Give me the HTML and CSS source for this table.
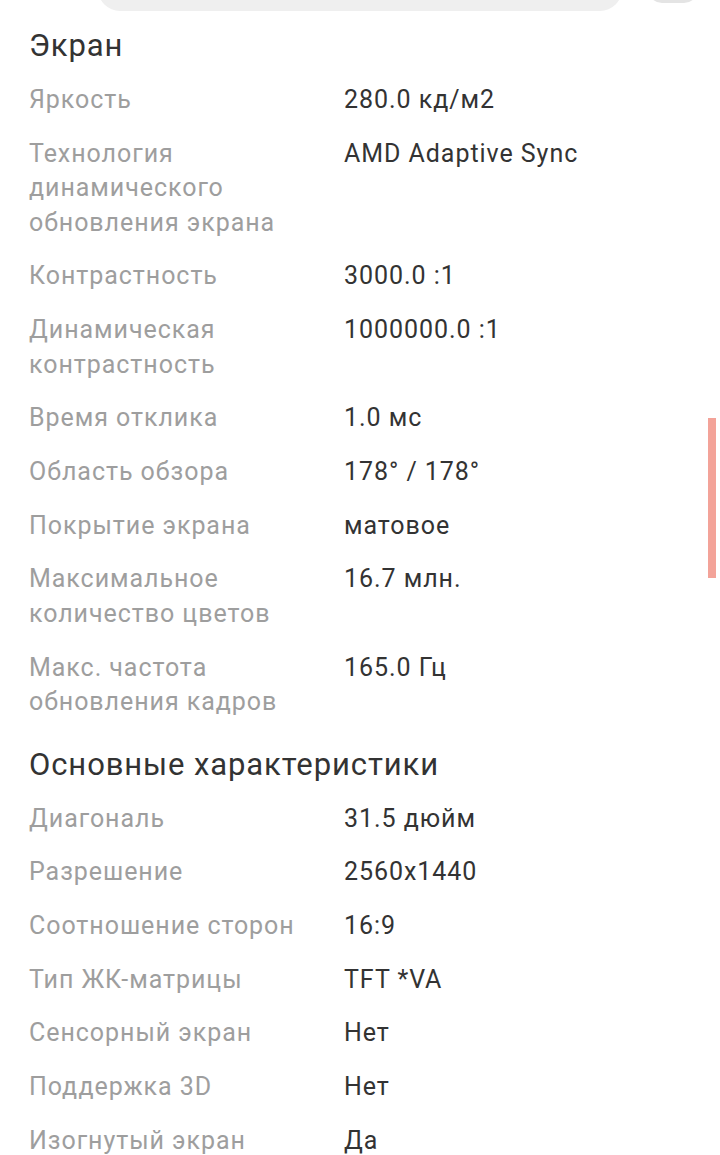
FILE: index.html
```html
<!DOCTYPE html>
<html lang="ru">
<head>
<meta charset="utf-8">
<link rel="stylesheet" href="styles.css">
</head>
<body>
<div class="topbar">
  <div class="search"></div>
  <div class="btn"></div>
</div>
<main class="page">
  <section class="section">
    <h2 class="title">Экран</h2>
    <dl class="specs">
      <div class="row"><dt>Яркость</dt><dd>280.0 кд/м2</dd></div>
      <div class="row"><dt>Технология динамического обновления экрана</dt><dd>AMD Adaptive Sync</dd></div>
      <div class="row"><dt>Контрастность</dt><dd>3000.0 :1</dd></div>
      <div class="row"><dt>Динамическая контрастность</dt><dd>1000000.0 :1</dd></div>
      <div class="row"><dt>Время отклика</dt><dd>1.0 мс</dd></div>
      <div class="row"><dt>Область обзора</dt><dd>178° / 178°</dd></div>
      <div class="row"><dt>Покрытие экрана</dt><dd>матовое</dd></div>
      <div class="row"><dt>Максимальное количество цветов</dt><dd>16.7 млн.</dd></div>
      <div class="row"><dt>Макс. частота обновления кадров</dt><dd>165.0 Гц</dd></div>
    </dl>
  </section>
  <section class="section">
    <h2 class="title">Основные характеристики</h2>
    <dl class="specs">
      <div class="row"><dt>Диагональ</dt><dd>31.5 дюйм</dd></div>
      <div class="row"><dt>Разрешение</dt><dd>2560x1440</dd></div>
      <div class="row"><dt>Соотношение сторон</dt><dd>16:9</dd></div>
      <div class="row"><dt>Тип ЖК-матрицы</dt><dd>TFT *VA</dd></div>
      <div class="row"><dt>Сенсорный экран</dt><dd>Нет</dd></div>
      <div class="row"><dt>Поддержка 3D</dt><dd>Нет</dd></div>
      <div class="row"><dt>Изогнутый экран</dt><dd>Да</dd></div>
    </dl>
  </section>
</main>
<div class="scrollbar"></div>
</body>
</html>
```
FILE: styles.css
```css
html, body {
  margin: 0;
  padding: 0;
  background: #ffffff;
}
body {
  font-family: Roboto, "Noto Sans", sans-serif;
  width: 720px;
  height: 1155px;
  overflow: hidden;
  position: relative;
}
.topbar {
  height: 11px;
  overflow: hidden;
  display: flex;
  align-items: flex-end;
  padding: 0 20px 0 98px;
  gap: 26px;
}
.search {
  flex: 0 0 524px;
  height: 44px;
  border-radius: 0 0 22px 22px;
  background: #efefef;
}
.btn {
  flex: 0 0 50px;
  height: 40px;
  margin-bottom: 8px;
  border-radius: 0 0 14px 14px;
  background: #e4e4e4;
}
.page {
  padding: 0 0 0 29px;
}
.section {
  margin: 0;
}
.title {
  margin: 15px 0 17px;
  font-size: 31px;
  letter-spacing: 0.9px;
  line-height: 40px;
  font-weight: 400;
  color: #333333;
}
.section + .section .title {
  margin-top: 25px;
}
.specs {
  margin: 0;
  display: flex;
  flex-direction: column;
  gap: 19.2px;
}
.row {
  display: grid;
  grid-template-columns: 300px 1fr;
  column-gap: 15px;
}
.row dt, .row dd {
  margin: 0;
  font-size: 25px;
  letter-spacing: 0.95px;
  line-height: 34.5px;
}
.row dt {
  color: #9e9e9e;
}
.row dd {
  color: #333333;
}
.scrollbar {
  position: absolute;
  left: 708px;
  top: 418px;
  width: 8px;
  height: 160px;
  background: #f3a399;
}
```
